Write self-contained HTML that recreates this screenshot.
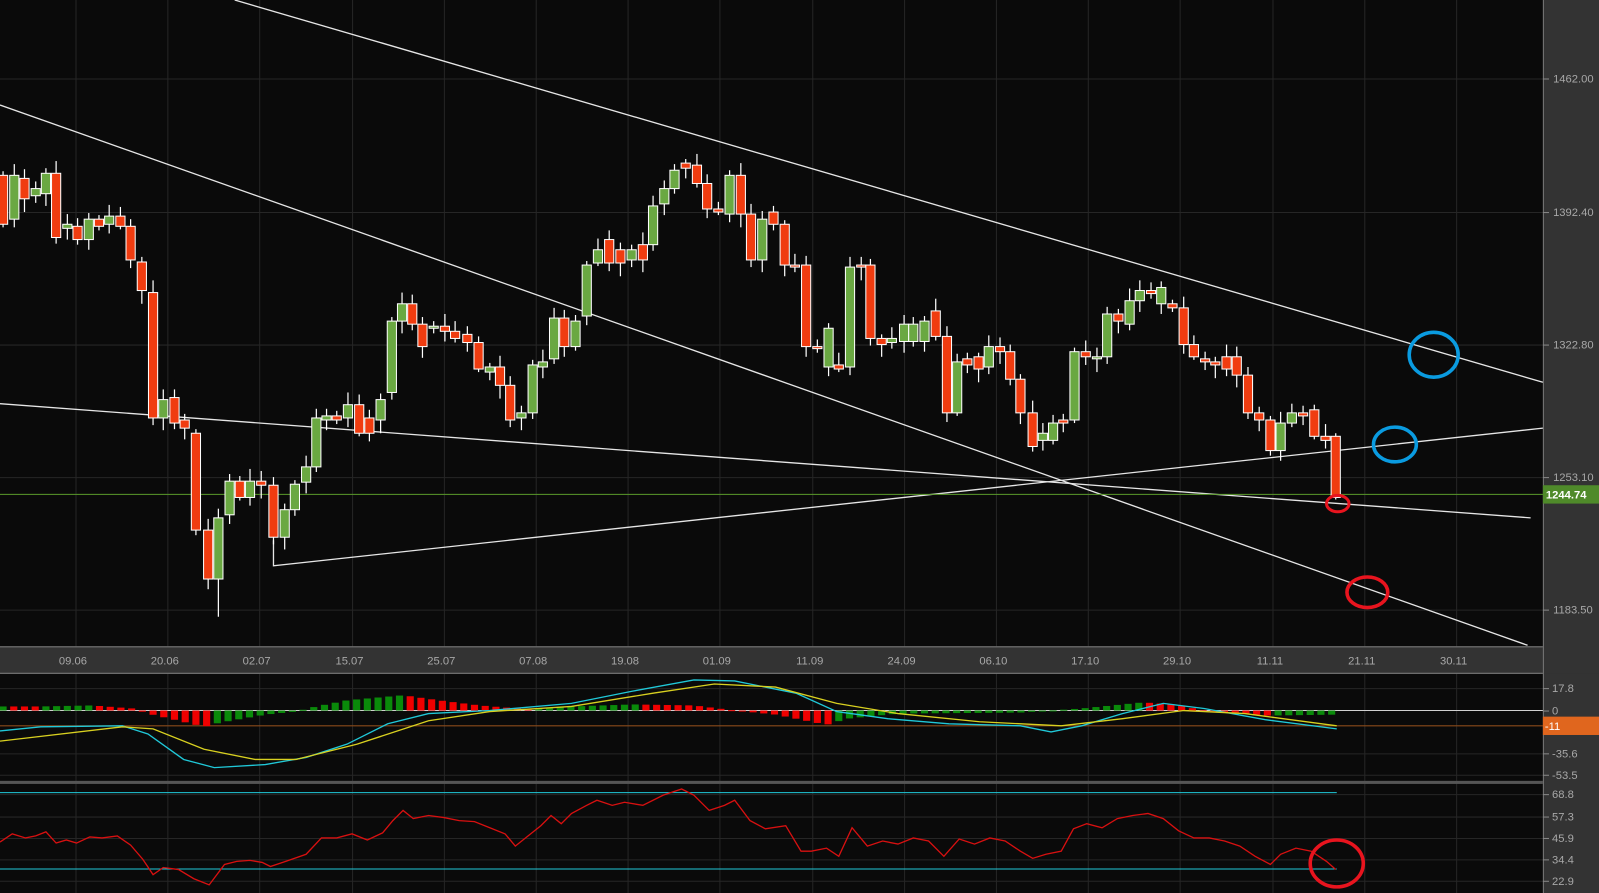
<!DOCTYPE html>
<html><head><meta charset="utf-8"><style>
html,body{margin:0;padding:0;background:#0a0a0a;overflow:hidden}
svg{display:block}
text{font-family:"Liberation Sans",sans-serif;font-size:11px;fill:#a8a8a8}
</style></head><body>
<svg id="s" width="1599" height="893" viewBox="0 0 1567 876" preserveAspectRatio="none" xmlns="http://www.w3.org/2000/svg">
<rect x="0" y="0" width="1567" height="876" fill="#0a0a0a"/>
<g id="grid" stroke="#262626" stroke-width="1"></g>
<!-- right axis -->
<rect x="1512" y="0" width="55" height="876" fill="#333"/>
<rect x="0" y="634" width="1567" height="27" fill="#333"/>
<line x1="0" y1="634.5" x2="1512" y2="634.5" stroke="#777"/>
<line x1="0" y1="660.5" x2="1512" y2="660.5" stroke="#777"/>
<line x1="1512.5" y1="0" x2="1512.5" y2="876" stroke="#777"/>
<rect x="0" y="766" width="1512" height="3" fill="#555"/>
<g id="axis"></g>
<!-- trend lines -->
<g stroke="#e6e6e6" stroke-width="1.3" fill="none">
<line x1="230" y1="0" x2="1512" y2="375"/>
<line x1="0" y1="103" x2="1497" y2="633"/>
<line x1="0" y1="396" x2="1500" y2="508"/>
<polyline points="268,530 268,555 1512,420"/>
</g>
<line x1="0" y1="485" x2="1512" y2="485" stroke="#5a9a2a" stroke-width="1"/>
<g id="candles"></g>
<rect x="1512" y="476" width="55" height="18" fill="#4f8a2a"/>
<text x="1515" y="489" style="fill:#fff;font-weight:bold">1244.74</text>
<!-- MACD -->
<line x1="0" y1="697" x2="1512" y2="697" stroke="#d0d0d0" stroke-width="1"/>
<line x1="0" y1="712" x2="1512" y2="712" stroke="#8a4a1a" stroke-width="1"/>
<g id="hist"></g>
<polyline id="cy" fill="none" stroke="#20c8d8" stroke-width="1.3"/>
<polyline id="ye" fill="none" stroke="#d8d020" stroke-width="1.3"/>
<rect x="1512" y="703" width="55" height="18" fill="#e0661e"/>
<text x="1514" y="716" style="fill:#fff">-11</text>
<!-- RSI -->
<line x1="0" y1="777.5" x2="1310" y2="777.5" stroke="#20c8d8"/>
<line x1="0" y1="852.5" x2="1310" y2="852.5" stroke="#20c8d8"/>
<polyline id="rsi" fill="none" stroke="#d81010" stroke-width="1.3"/>
<!-- circles -->
<g fill="none" stroke-width="3.5">
<ellipse cx="1405" cy="348" rx="24" ry="22" stroke="#0a9be0"/>
<ellipse cx="1367" cy="436" rx="21" ry="17" stroke="#0a9be0"/>
<ellipse cx="1311" cy="494" rx="11" ry="8" stroke="#e8141e" stroke-width="3"/>
<ellipse cx="1340" cy="581" rx="20" ry="15" stroke="#e8141e"/>
<ellipse cx="1310" cy="847" rx="26" ry="23" stroke="#e8141e"/>
</g>
</svg>
<script>
var NS="http://www.w3.org/2000/svg";
function el(p,t,a,txt){var e=document.createElementNS(NS,t);for(var k in a)e.setAttribute(k,a[k]);if(txt!=null)e.textContent=txt;p.appendChild(e);return e;}
var g=document.getElementById('grid'),ax=document.getElementById('axis');
var dates=["09.06","20.06","02.07","15.07","25.07","07.08","19.08","01.09","11.09","24.09","06.10","17.10","29.10","11.11","21.11","30.11"];
for(var i=0;i<16;i++){var x=Math.round(74+90.2*i)+0.5;el(g,'line',{x1:x,y1:0,x2:x,y2:876});el(ax,'text',{x:x-3,y:652,'text-anchor':'middle'},dates[i]);}
[[77,"1462.00"],[208,"1392.40"],[338,"1322.80"],[468,"1253.10"],[598,"1183.50"]].forEach(function(p){el(g,'line',{x1:0,y1:p[0]+.5,x2:1512,y2:p[0]+.5});el(ax,'line',{x1:1512,y1:p[0]+.5,x2:1518,y2:p[0]+.5,stroke:'#888'});el(ax,'text',{x:1522,y:p[0]+4},p[1]);});
[[675,"17.8"],[697,"0"],[739,"-35.6"],[760,"-53.5"],[779,"68.8"],[801,"57.3"],[822,"45.9"],[843,"34.4"],[864,"22.9"]].forEach(function(p){if(p[1]!="0")el(g,'line',{x1:0,y1:p[0]+.5,x2:1512,y2:p[0]+.5});el(ax,'line',{x1:1512,y1:p[0]+.5,x2:1518,y2:p[0]+.5,stroke:'#888'});el(ax,'text',{x:1521,y:p[0]+4},p[1]);});
var C=[[3,'R',172,220],[14,'G',172,215],[24,'R',175,195],[35,'G',185,192],[45,'G',170,190],[55,'R',170,233],[66,'G',220,224],[76,'R',222,235],[87,'G',215,235],[97,'R',215,222],[107,'G',212,220],[118,'R',212,222],[128,'R',222,255],[139,'R',257,285],[150,'R',287,410],[160,'G',392,410],[171,'R',390,415],[181,'R',412,420],[192,'R',425,520],[204,'R',520,568],[214,'G',508,568],[225,'G',472,505],[235,'R',472,488],[245,'G',472,488],[256,'R',472,476],[268,'R',476,527],[279,'G',500,527],[289,'G',475,500],[300,'G',458,473],[310,'G',410,458],[320,'G',408,412],[330,'R',408,412],[341,'G',397,410],[352,'R',397,425],[362,'R',410,425],[373,'G',392,412],[384,'G',315,385],[394,'G',298,315],[404,'R',298,318],[414,'R',318,340],[425,'G',320,322],[436,'R',320,325],[446,'R',325,332],[458,'R',328,336],[469,'R',336,362],[480,'G',360,365],[490,'R',360,378],[500,'R',378,412],[511,'G',405,410],[522,'G',358,405],[532,'G',355,360],[543,'G',312,352],[553,'R',312,340],[564,'G',315,340],[575,'G',260,310],[586,'G',245,258],[597,'R',235,258],[608,'R',245,258],[619,'G',245,255],[630,'R',240,255],[640,'G',202,240],[651,'G',185,200],[661,'G',167,185],[672,'R',160,165],[683,'R',162,180],[693,'R',180,205],[704,'R',205,208],[715,'G',172,210],[726,'R',172,210],[736,'R',210,255],[747,'G',215,255],[758,'R',208,220],[769,'R',220,260],[779,'R',260,262],[790,'R',260,340],[801,'R',340,342],[812,'G',322,360],[822,'R',358,362],[833,'G',262,360],[844,'R',260,262],[853,'R',260,332],[864,'R',332,338],[874,'G',332,336],[886,'G',318,335],[895,'G',318,335],[906,'G',315,335],[917,'R',305,330],[928,'R',330,405],[938,'G',355,405],[948,'R',352,358],[959,'R',350,362],[969,'G',340,360],[980,'R',340,345],[990,'R',345,372],[1000,'R',372,405],[1012,'R',405,438],[1022,'G',425,432],[1032,'G',415,432],[1042,'R',412,415],[1053,'G',345,412],[1064,'R',345,350],[1075,'G',350,352],[1085,'G',308,350],[1096,'R',308,315],[1107,'G',295,318],[1117,'G',285,295],[1128,'R',285,288],[1138,'G',282,298],[1149,'R',298,302],[1160,'R',302,338],[1170,'R',338,350],[1181,'R',352,355],[1191,'R',355,358],[1202,'R',350,362],[1212,'R',350,368],[1223,'R',368,405],[1234,'R',405,412],[1245,'R',412,442],[1255,'G',415,442],[1266,'G',405,415],[1277,'R',405,408],[1288,'R',402,428],[1299,'R',428,432],[1309,'R',428,488]];
var cg=document.getElementById('candles');
C.forEach(function(c,i){var up=4+((i*7)%9),dn=3+((i*5)%11);if(i==20)dn=37;if(i==123){up=3;dn=2;}
el(cg,'line',{x1:c[0],y1:c[2]-up,x2:c[0],y2:c[3]+dn,stroke:'#fff','stroke-width':1.2});
el(cg,'rect',{x:c[0]-4.5,y:c[2],width:9,height:Math.max(2,c[3]-c[2]),fill:c[1]=='R'?'#f03c10':'#6aa842',stroke:'#fff','stroke-width':1});});
function interp(k,x){for(var i=1;i<k.length;i++){if(x<=k[i][0]){var a=k[i-1],b=k[i];return a[1]+(b[1]-a[1])*(x-a[0])/(b[0]-a[0]);}}return k[k.length-1][1];}
var HK=[[0,4],[40,4],[90,5],[130,2],[145,-3],[175,-10],[200,-16],[215,-12],[260,-4],[290,-1],[310,4],[340,10],[395,15],[430,10],[470,5],[520,1],[560,4],[620,6],[680,5],[720,0],[760,-4],[810,-14],[830,-8],[880,-3],[1000,-2],[1060,2],[1120,8],[1150,6],[1180,0],[1240,-5],[1310,-4]];
var hg=document.getElementById('hist'),prev=0;
for(var x=3;x<=1310;x+=10.5){var v=interp(HK,x);var col=v>prev?'#0a8a0a':'#f00000';prev=v;
el(hg,'rect',{x:x-3.5,y:v>0?697-v:697,width:7,height:Math.max(1,Math.abs(v)),fill:col});}
function pts(k){return k.map(function(p){return p.join(',')}).join(' ');}
document.getElementById('cy').setAttribute('points',pts([[0,717],[40,713],[120,712],[145,720],[180,745],[210,753],[260,750],[300,743],[340,730],[380,710],[420,700],[480,697],[560,690],[620,678],[680,667],[720,668],[780,680],[820,698],[870,705],[930,710],[1000,712],[1030,718],[1060,712],[1100,700],[1140,690],[1180,695],[1240,706],[1310,715]]));
document.getElementById('ye').setAttribute('points',pts([[0,727],[120,713],[150,715],[200,735],[250,745],[290,745],[350,730],[420,707],[480,698],[560,693],[640,680],[700,671],[760,674],[820,690],[880,700],[960,708],[1040,712],[1100,705],[1160,697],[1220,700],[1310,712]]));
document.getElementById('rsi').setAttribute('points',pts([[0,826],[12,818],[25,822],[35,820],[45,816],[55,827],[65,824],[75,827],[88,821],[100,822],[115,820],[128,829],[140,843],[150,858],[160,851],[175,853],[190,862],[205,868],[220,848],[232,845],[245,844],[257,846],[265,850],[280,845],[300,838],[315,822],[330,822],[345,818],[360,824],[375,817],[385,805],[395,795],[405,803],[420,800],[435,802],[450,805],[465,806],[480,812],[495,818],[505,830],[520,818],[530,810],[540,800],[550,808],[560,798],[575,790],[585,785],[600,790],[612,787],[630,790],[650,780],[668,774],[680,780],[695,795],[710,790],[720,785],[735,805],[750,813],[770,810],[785,835],[795,835],[810,832],[822,840],[835,812],[850,830],[865,825],[880,828],[895,822],[910,825],[925,840],[940,823],[955,828],[970,822],[985,825],[1000,835],[1012,842],[1025,838],[1040,835],[1052,813],[1065,808],[1080,812],[1095,803],[1110,800],[1125,798],[1140,803],[1155,815],[1170,822],[1185,822],[1200,825],[1215,830],[1230,840],[1245,848],[1255,838],[1270,832],[1285,835],[1300,845],[1309,853]]));
</script>
</body></html>
